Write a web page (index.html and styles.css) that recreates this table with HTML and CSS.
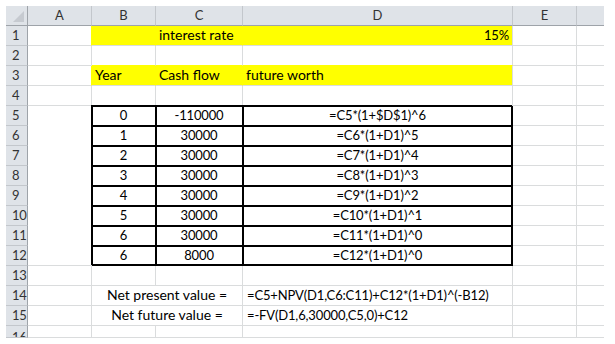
FILE: index.html
```html
<!DOCTYPE html>
<html>
<head>
<meta charset="utf-8">
<link rel="stylesheet" href="styles.css">
</head>
<body>
<div class="sheet">
  <div class="hd corner"><svg width="11" height="11" viewBox="0 0 11 11"><path d="M11 0 V11 H0 Z" fill="#c6cad0"/></svg></div>
  <div class="hd col">A</div>
  <div class="hd col">B</div>
  <div class="hd col">C</div>
  <div class="hd col">D</div>
  <div class="hd col">E</div>
  <div class="hd col last"></div>

  <div class="rh">1</div>
  <div class="c ry"></div>
  <div class="c y ry"></div>
  <div class="c y ry">interest rate</div>
  <div class="c y r n">15%</div>
  <div class="c"></div>
  <div class="c last"></div>

  <div class="rh">2</div>
  <div class="c"></div>
  <div class="c by"></div>
  <div class="c by"></div>
  <div class="c by"></div>
  <div class="c"></div>
  <div class="c last"></div>

  <div class="rh">3</div>
  <div class="c ry"></div>
  <div class="c y ry">Year</div>
  <div class="c y ry">Cash flow</div>
  <div class="c y">future worth</div>
  <div class="c"></div>
  <div class="c last"></div>

  <div class="rh">4</div>
  <div class="c bw"></div>
  <div class="c"></div>
  <div class="c"></div>
  <div class="c"></div>
  <div class="c"></div>
  <div class="c last"></div>

  <div class="rh">5</div>
  <div class="c w"></div>
  <div class="c bx m n">0</div>
  <div class="c bx m n">-110000</div>
  <div class="c bx bxr m n">=C5*(1+$D$1)^6</div>
  <div class="c"></div>
  <div class="c last"></div>

  <div class="rh">6</div>
  <div class="c w"></div>
  <div class="c bx m n">1</div>
  <div class="c bx m n">30000</div>
  <div class="c bx bxr m n">=C6*(1+D1)^5</div>
  <div class="c"></div>
  <div class="c last"></div>

  <div class="rh">7</div>
  <div class="c w"></div>
  <div class="c bx m n">2</div>
  <div class="c bx m n">30000</div>
  <div class="c bx bxr m n">=C7*(1+D1)^4</div>
  <div class="c"></div>
  <div class="c last"></div>

  <div class="rh">8</div>
  <div class="c w"></div>
  <div class="c bx m n">3</div>
  <div class="c bx m n">30000</div>
  <div class="c bx bxr m n">=C8*(1+D1)^3</div>
  <div class="c"></div>
  <div class="c last"></div>

  <div class="rh">9</div>
  <div class="c w"></div>
  <div class="c bx m n">4</div>
  <div class="c bx m n">30000</div>
  <div class="c bx bxr m n">=C9*(1+D1)^2</div>
  <div class="c"></div>
  <div class="c last"></div>

  <div class="rh">10</div>
  <div class="c w"></div>
  <div class="c bx m n">5</div>
  <div class="c bx m n">30000</div>
  <div class="c bx bxr m n">=C10*(1+D1)^1</div>
  <div class="c"></div>
  <div class="c last"></div>

  <div class="rh">11</div>
  <div class="c w"></div>
  <div class="c bx m n">6</div>
  <div class="c bx m n">30000</div>
  <div class="c bx bxr m n">=C11*(1+D1)^0</div>
  <div class="c"></div>
  <div class="c last"></div>

  <div class="rh">12</div>
  <div class="c wl"></div>
  <div class="c bx bxb m n">6</div>
  <div class="c bx bxb m n">8000</div>
  <div class="c bx bxr bxb m n">=C12*(1+D1)^0</div>
  <div class="c"></div>
  <div class="c last"></div>

  <div class="rh">13</div>
  <div class="c"></div>
  <div class="c"></div>
  <div class="c"></div>
  <div class="c"></div>
  <div class="c"></div>
  <div class="c last"></div>

  <div class="rh">14</div>
  <div class="c"></div>
  <div class="c span2 m">Net present value =</div>
  <div class="c n f">=C5+NPV(D1,C6:C11)+C12*(1+D1)^(-B12)</div>
  <div class="c"></div>
  <div class="c last"></div>

  <div class="rh">15</div>
  <div class="c"></div>
  <div class="c span2 m">Net future value =</div>
  <div class="c n f">=-FV(D1,6,30000,C5,0)+C12</div>
  <div class="c"></div>
  <div class="c last"></div>

  <div class="rh cut">16</div>
  <div class="c cut"></div>
  <div class="c cut"></div>
  <div class="c cut"></div>
  <div class="c cut"></div>
  <div class="c cut"></div>
  <div class="c cut last"></div>
</div>
</body>
</html>
```

FILE: styles.css
```css
html, body {
  margin: 0;
  padding: 0;
  background: #ffffff;
}

.sheet {
  display: grid;
  grid-template-columns: 22px 64px 64px 87px 270px 64px 27px;
  grid-template-rows: 20px repeat(15, 20px) 12px;
  margin: 6px 0 0 6px;
  width: 598px;
  overflow: hidden;
  font-family: Lato, "Liberation Sans", sans-serif;
  font-size: 14px;
  color: #000;
}

.sheet > div {
  box-sizing: border-box;
  display: flex;
  align-items: flex-end;
  white-space: nowrap;
  line-height: 16px;
}

.hd {
  background: #dfe3e8;
  border-right: 1px solid #c3c7cc;
  border-bottom: 1px solid #9ea3a9;
  color: #333;
  font-size: 13px;
  justify-content: center;
  padding-bottom: 2px;
}

.corner {
  justify-content: flex-end;
  padding: 0 3px 3px 0;
  border-right-color: #9ea3a9;
}

.hd.last {
  border-right: none;
}

.rh {
  background: #dfe3e8;
  border-right: 1px solid #9ea3a9;
  border-bottom: 1px solid #c3c7cc;
  color: #333;
  font-size: 13px;
  letter-spacing: -0.2px;
  padding: 0 0 2px 6px;
}

.c {
  border-right: 1px solid #dadcdd;
  border-bottom: 1px solid #dadcdd;
  padding: 0 3px 2px 3px;
}

.n {
  font-size: 13px;
  letter-spacing: -0.15px;
}

.f {
  padding-left: 4px;
}

.c.last {
  border-right: none;
}

.cut {
  overflow: hidden;
  align-items: flex-start !important;
  padding-top: 3px !important;
}

.y { background: #ffff00; }
.ry { border-right-color: #ffff00; }
.by { border-bottom-color: #ffff00; }

.w { border-bottom-color: #ffffff; }
.bw { border-bottom-color: #dadcdd; }
.wl { border-bottom-color: #dadcdd; }

.r { justify-content: flex-end; }
.m { justify-content: center; }

.bx {
  border-right-color: #000;
  border-bottom-color: #000;
  box-shadow: -1px -1px 0 #000, inset 1px 1px 0 #000;
}

.bxr {
  box-shadow: -1px -1px 0 #000, inset 1px 1px 0 #000, inset -1px 0 0 #000;
}

.bxb {
  box-shadow: -1px -1px 0 #000, inset 1px 1px 0 #000, inset 0 -1px 0 #000;
}

.bxr.bxb {
  box-shadow: -1px -1px 0 #000, inset 1px 1px 0 #000, inset -1px -1px 0 #000;
}

.span2 {
  grid-column: span 2;
}
```
